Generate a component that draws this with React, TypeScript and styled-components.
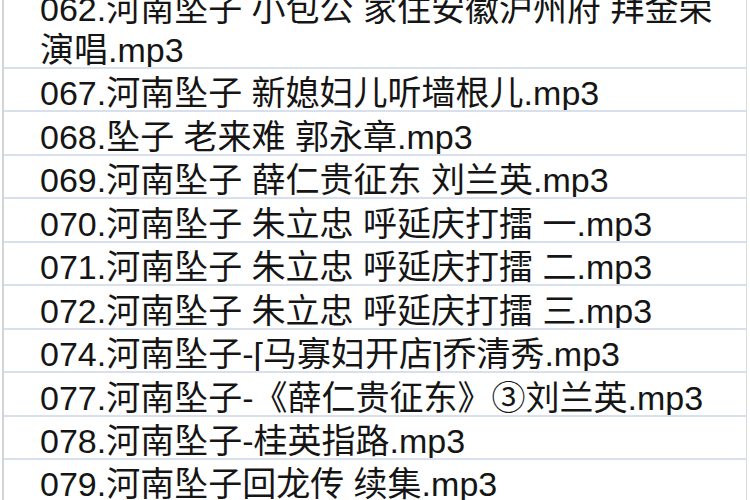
import React from "react";
import styled, { createGlobalStyle } from "styled-components";

const Global = createGlobalStyle`
  html, body {
    margin: 0;
    padding: 0;
    background: #ffffff;
    overflow: hidden;
  }
  body {
    width: 750px;
    height: 500px;
  }
`;

const Sheet = styled.div`
  margin-left: 2px;
  width: 745px;
  height: 500px;
  box-sizing: border-box;
  border-left: 2px solid #d4d4d4;
  border-right: 1px solid #dadada;
  display: flex;
  flex-direction: column;
  overflow: hidden;
  font-family: "Liberation Sans", "Noto Sans CJK SC", sans-serif;
  font-size: 34px;
  color: #151515;
`;

const Row = styled.div<{ $h: number }>`
  flex: 0 0 auto;
  height: ${(p) => p.$h}px;
  box-sizing: border-box;
  border-bottom: 2px solid #d8e0ee;
  padding-left: 36px;
  display: flex;
  flex-direction: column;
  justify-content: flex-end;
  gap: 7.5px;
  overflow: hidden;
  white-space: nowrap;
`;

const Line = styled.span`
  display: block;
  line-height: 34px;
`;

const rows = [
  "067.河南坠子 新媳妇儿听墙根儿.mp3",
  "068.坠子 老来难 郭永章.mp3",
  "069.河南坠子 薛仁贵征东 刘兰英.mp3",
  "070.河南坠子 朱立忠 呼延庆打擂 一.mp3",
  "071.河南坠子 朱立忠 呼延庆打擂 二.mp3",
  "072.河南坠子 朱立忠 呼延庆打擂 三.mp3",
  "074.河南坠子-[马寡妇开店]乔清秀.mp3",
  "077.河南坠子-《薛仁贵征东》③刘兰英.mp3",
  "078.河南坠子-桂英指路.mp3",
  "079.河南坠子回龙传 续集.mp3",
];

export default function App() {
  return (
    <>
      <Global />
      <Sheet>
        <Row $h={69}>
          <Line>062.河南坠子 小包公 家住安徽沪州府 拜金荣</Line>
          <Line>演唱.mp3</Line>
        </Row>
        {rows.map((t) => (
          <Row key={t} $h={43.44}>
            <Line>{t}</Line>
          </Row>
        ))}
      </Sheet>
    </>
  );
}
